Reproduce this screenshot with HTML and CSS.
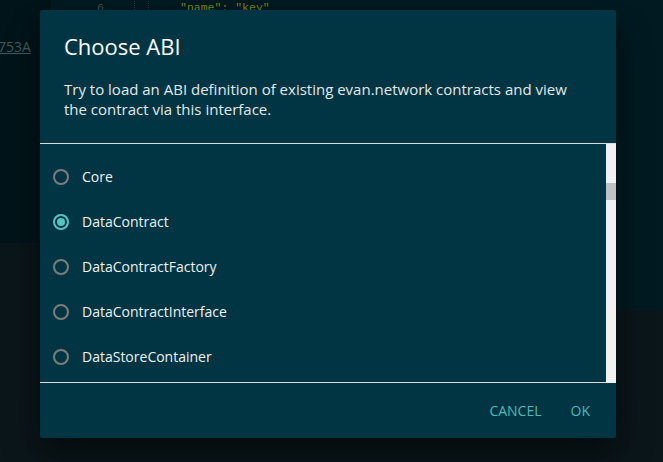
FILE: index.html
```html
<!DOCTYPE html>
<html>
<head>
<meta charset="utf-8">
<link rel="stylesheet" href="styles.css">
</head>
<body>
<div class="page">
  <div class="sidebar">
    <a class="addr">753A</a>
  </div>
  <div class="editor">
    <div class="code-line">
      <span class="ln">6</span>
      <span class="guide"></span>
      <span class="guide"></span>
      <span class="code">"name": "key"</span>
    </div>
  </div>
</div>

<div class="dialog">
  <h2 class="title">Choose ABI</h2>
  <p class="desc">Try to load an ABI definition of existing evan.network contracts and view the contract via this interface.</p>
  <div class="content">
    <ul class="list">
      <li class="item"><span class="radio"></span><span class="label">Core</span></li>
      <li class="item"><span class="radio checked"></span><span class="label">DataContract</span></li>
      <li class="item"><span class="radio"></span><span class="label">DataContractFactory</span></li>
      <li class="item"><span class="radio"></span><span class="label">DataContractInterface</span></li>
      <li class="item"><span class="radio"></span><span class="label">DataStoreContainer</span></li>
    </ul>
    <div class="scrollbar"><div class="thumb"></div></div>
  </div>
  <div class="actions">
    <button class="btn">CANCEL</button>
    <button class="btn">OK</button>
  </div>
</div>
</body>
</html>
```

FILE: styles.css
```css
* { box-sizing: border-box; }
html, body {
  margin: 0;
  padding: 0;
  width: 663px;
  height: 462px;
  overflow: hidden;
  background: #0b171b;
  font-family: "Open Sans", "Noto Sans", sans-serif;
}
.page {
  display: flex;
  align-items: flex-start;
  width: 663px;
  height: 462px;
}
.sidebar {
  width: 51px;
  height: 243px;
  background: #02151a;
  padding-top: 38px;
}
.addr {
  display: block;
  color: #3f6065;
  font-size: 14px;
  line-height: 18px;
  text-decoration: underline;
  margin-left: -2px;
}
.editor {
  flex: 1;
  height: 311px;
  background: #021b22;
}
.code-line {
  display: flex;
  align-items: flex-start;
  height: 14px;
  margin-top: 1px;
  font-family: "Liberation Mono", monospace;
  font-size: 11.5px;
  line-height: 14px;
}
.ln {
  color: #3e5157;
  margin-left: 46px;
  width: 37px;
}
.guide {
  width: 14px;
  height: 14px;
  margin-top: -3px;
  border-left: 1px dotted #1f3a40;
}
.code {
  color: #7a8a1f;
  margin-left: 18px;
}

.dialog {
  position: absolute;
  left: 40px;
  top: 10px;
  width: 576px;
  height: 428px;
  background: #023543;
  border-radius: 2px;
  box-shadow: 0 11px 15px -7px rgba(0,0,0,.3), 0 24px 38px 3px rgba(0,0,0,.2), 0 9px 46px 8px rgba(0,0,0,.18);
  display: flex;
  flex-direction: column;
}
.title {
  margin: 0;
  padding: 20px 24px 0;
  font-size: 22px;
  line-height: 32px;
  font-weight: 400;
  color: #ffffff;
}
.desc {
  margin: 17px 0 0;
  padding: 0 24px 24px;
  font-size: 15px;
  line-height: 20px;
  color: #e4e8e9;
}
.content {
  display: flex;
  border-top: 1px solid #d9dcdd;
  height: 240px;
}
.list {
  list-style: none;
  margin: 0;
  padding: 10px 0 0;
  flex: 1;
  overflow: hidden;
  border-bottom: 1px solid #d9dcdd;
}
.item {
  display: flex;
  align-items: center;
  height: 45px;
  padding-left: 13px;
}
.radio {
  width: 16px;
  height: 16px;
  border: 2px solid #7b7d7d;
  border-radius: 50%;
  margin-right: 13px;
  flex: none;
  position: relative;
}
.radio.checked {
  border-color: #55c4c0;
}
.radio.checked::after {
  content: "";
  position: absolute;
  left: 2px;
  top: 2px;
  width: 8px;
  height: 8px;
  border-radius: 50%;
  background: #55c4c0;
}
.label {
  font-size: 14px;
  color: #eef1f1;
}
.scrollbar {
  width: 10px;
  background: #f1f1f1;
  padding-top: 39px;
}
.thumb {
  height: 17px;
  background: #c1c1c1;
}
.actions {
  flex: 1;
  display: flex;
  justify-content: flex-end;
  align-items: center;
  padding: 0 18px 0 0;
  gap: 13px;
}
.btn {
  background: none;
  border: none;
  font-family: "Open Sans", "Noto Sans", sans-serif;
  font-size: 14px;
  color: #4fb8b4;
  padding: 0 8px;
  height: 36px;
  line-height: 36px;
}
```
